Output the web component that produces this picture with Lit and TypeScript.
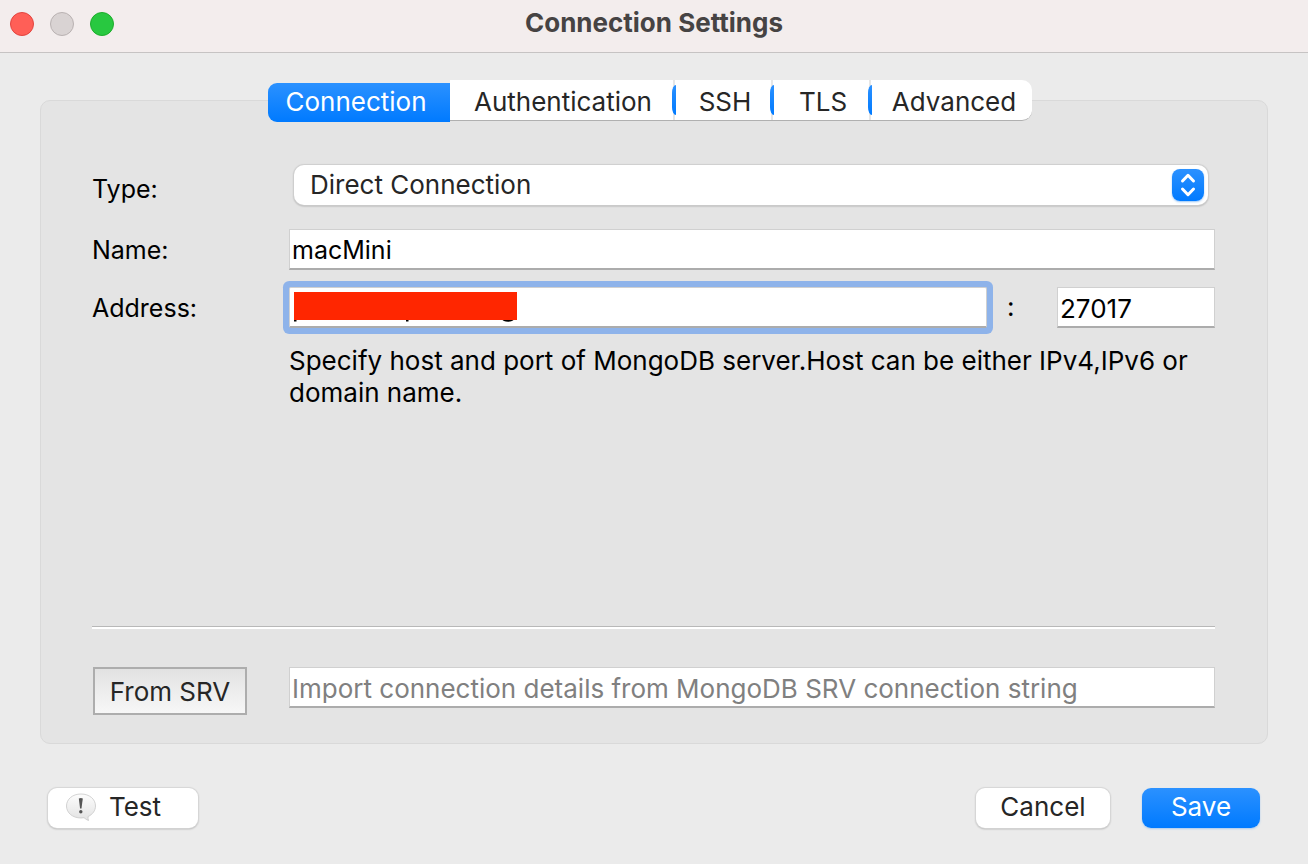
import { LitElement, html, css } from "lit";
import { customElement, state } from "lit/decorators.js";
import { classMap } from "lit/directives/class-map.js";

const TABS = ["Connection", "Authentication", "SSH", "TLS", "Advanced"];

@customElement("app-root")
export class AppRoot extends LitElement {
  @state() private active = 0;

  static styles = css`
    :host {
      display: flex;
      flex-direction: column;
      min-height: 100vh;
      box-sizing: border-box;
      background: #ebebeb;
      color: #000;
      font-family: Inter, "Liberation Sans", sans-serif;
      font-size: 26px;
      line-height: 32px;
    }
    * {
      box-sizing: border-box;
    }
    button,
    input,
    select {
      font: inherit;
      color: inherit;
      margin: 0;
      outline: none;
    }
    .titlebar {
      display: grid;
      grid-template-columns: 1fr auto 1fr;
      align-items: center;
      height: 53px;
      padding: 0 10px 5px;
      background: #f3eded;
      border-bottom: 1px solid #c6c3c3;
    }
    .lights {
      display: flex;
      gap: 16px;
    }
    .light {
      width: 24px;
      height: 24px;
      padding: 0;
      border-radius: 50%;
      border: 1px solid #e2443f;
      background: #ff5f57;
    }
    .light.minimize {
      border-color: #b9b2b2;
      background: #d9d3d3;
    }
    .light.zoom {
      border-color: #1dad2b;
      background: #28c840;
    }
    h1 {
      margin: 0;
      padding-bottom: 2px;
      font-size: 26px;
      line-height: 32px;
      font-weight: 700;
      color: #464343;
    }
    main {
      flex: 1;
      display: flex;
      flex-direction: column;
      padding: 27px 40px 0;
    }
    .tabs {
      display: flex;
      align-self: center;
      align-items: flex-start;
      position: relative;
      margin: 0 8px -22px 0;
    }
    .tab {
      position: relative;
      display: flex;
      justify-content: center;
      height: 41px;
      padding: 2px 0 0 4px;
      border: 0;
      border-bottom: 1px solid #b0b0b0;
      background: #fff;
      color: #262626;
      line-height: 40px;
    }
    .tab.wide {
      width: 222px;
    }
    .tab.selected {
      width: 182px;
      height: 39px;
      margin-top: 3px;
      padding: 0 6px 0 0;
      border: 0;
      border-radius: 9px 0 0 9px;
      background: linear-gradient(#2b91ff, #007aff);
      color: #fff;
      line-height: 38px;
    }
    .tab.divided {
      width: 98px;
      padding-left: 8px;
      background: linear-gradient(#e6e6e6, #e6e6e6) 1px 0 / 2px 40px no-repeat, #fff;
    }
    .tab.divided::before {
      content: "";
      position: absolute;
      left: 0;
      top: 5px;
      width: 4px;
      height: 30px;
      border-radius: 4px 0 0 4px / 8px 0 0 8px;
      background: linear-gradient(#2b91ff, #007aff);
    }
    .tab.last {
      width: 164px;
      border-radius: 0 10px 10px 0;
    }
    .panel {
      flex: 1;
      display: flex;
      flex-direction: column;
      padding: 64px 52px 28px 51px;
      border: 1px solid #d9d9d9;
      border-radius: 10px;
      background: #e4e4e4;
    }
    .form {
      display: grid;
      grid-template-columns: 197px minmax(0, 1fr);
      align-items: center;
      row-gap: 17px;
    }
    label,
    .name {
      font-size: 25px;
    }
    .field {
      width: 100%;
      min-width: 0;
      height: 41px;
      padding: 2px 2px 0;
      border: 1px solid #d0d0d0;
      border-bottom: 2px solid #acacac;
      border-radius: 0;
      background: #fff;
    }
    .field::placeholder {
      color: #808080;
      opacity: 1;
    }
    .select {
      display: grid;
      grid-template-columns: minmax(0, 1fr) 36px;
      align-items: center;
      height: 40px;
      margin: 0 7px 7px 5px;
      border-radius: 10px;
      background: #fff;
      box-shadow: 0 0 1px 1px #cfcfcf, 0 1px 2px #888;
    }
    .select select {
      grid-area: 1 / 1 / 2 / 3;
      height: 40px;
      padding: 0 40px 0 16px;
      appearance: none;
      border: 0;
      background: transparent;
      color: #262626;
    }
    .stepper {
      grid-area: 1 / 2;
      width: 32px;
      height: 32px;
      border-radius: 8px;
      background: linear-gradient(#2b91ff, #007aff);
      box-shadow: 0 1px 2px #9ac6f5;
      pointer-events: none;
    }
    .stepper svg {
      display: block;
    }
    .address {
      display: grid;
      grid-template-columns: minmax(0, 1fr) 70px 158px;
    }
    .colon {
      padding: 4px 0 0 20px;
    }
    .host {
      position: relative;
    }
    .host .field {
      box-shadow: 0 0 0 6px #8eb3ea;
      border-radius: 2px;
    }
    .redaction {
      position: absolute;
      left: 5px;
      top: 5px;
      display: block;
    }
    .hint {
      grid-column: 2;
      margin: 0;
    }
    .rule {
      width: 100%;
      height: 3px;
      margin: auto 0 0;
      border: 0;
      border-top: 1px solid #b8b8b8;
      background: #fff;
    }
    .import {
      display: grid;
      grid-template-columns: 154px minmax(0, 1fr);
      column-gap: 42px;
      padding: 38px 0 0 1px;
    }
    .srv {
      height: 48px;
      padding: 2px 0 0;
      border: 2px solid #adadad;
      background: linear-gradient(#e2e2e2, #f7f7f7);
      color: #262626;
    }
    footer {
      display: flex;
      gap: 32px;
      padding: 44px 48px 36px;
    }
    .push {
      display: flex;
      align-items: center;
      justify-content: center;
      width: 134px;
      height: 40px;
      padding: 0 0 2px;
      border: 0;
      border-radius: 9px;
      background: #fff;
      color: #262626;
      box-shadow: 0 0 1px 1px #d6d6d6, 0 1px 2px #999;
    }
    .push.test {
      width: 150px;
      margin-right: auto;
      padding-right: 20px;
      gap: 12px;
    }
    .push.primary {
      width: 118px;
      background: linear-gradient(#2b91ff, #007aff);
      color: #fff;
      box-shadow: 0 1px 2px #a9cbf0;
    }
  `;

  private tabClasses(i: number) {
    return classMap({
      tab: true,
      selected: i === this.active,
      wide: i === 1,
      divided: i > 1,
      last: i === TABS.length - 1,
    });
  }

  render() {
    return html`
      <header class="titlebar">
        <div class="lights">
          <button class="light" aria-label="Close"></button>
          <button class="light minimize" aria-label="Minimize" disabled></button>
          <button class="light zoom" aria-label="Zoom"></button>
        </div>
        <h1>Connection Settings</h1>
      </header>
      <main>
        <div class="tabs" role="tablist">
          ${TABS.map(
            (name, i) => html`<button
              class=${this.tabClasses(i)}
              role="tab"
              aria-selected=${i === this.active ? "true" : "false"}
              @click=${() => (this.active = i)}
            >${name}</button>`
          )}
        </div>
        <section class="panel">
          <div class="form">
            <label for="type">Type:</label>
            <div class="select">
              <select id="type">
                <option>Direct Connection</option>
              </select>
              <span class="stepper">
                <svg width="32" height="32" viewBox="0 0 32 32" fill="none" stroke="#fff" stroke-width="3" stroke-linecap="round" stroke-linejoin="round">
                  <path d="M10.500 12 16 6.300l5.500 5.700M10.500 20 16 25.700l5.500-5.700" />
                </svg>
              </span>
            </div>
            <label for="name">Name:</label>
            <input id="name" class="field name" .value=${"macMini"} />
            <label for="host">Address:</label>
            <div class="address">
              <div class="host">
                <input id="host" class="field" />
                <svg class="redaction" width="224" height="31" viewBox="0 0 224 31" aria-hidden="true">
                  <path d="M0 27h2.500v2.500H0zM112 27h2.500v2.500H112zM208 27h12q-1 2.800-6 2.800T208 27z" fill="#000" />
                  <path d="M0 0h223v28H0z" fill="#ff2600" />
                </svg>
              </div>
              <span class="colon">:</span>
              <input class="field" aria-label="Port" .value=${"27017"} />
            </div>
            <p class="hint">
              Specify host and port of MongoDB server.Host can be either IPv4,IPv6 or domain name.
            </p>
          </div>
          <hr class="rule" />
          <div class="import">
            <button class="srv">From SRV</button>
            <input class="field" aria-label="SRV connection string" placeholder="Import connection details from MongoDB SRV connection string" />
          </div>
        </section>
      </main>
      <footer>
        <button class="push test">
          <svg width="32" height="30" viewBox="0 0 32 30" aria-hidden="true">
            <defs>
              <linearGradient id="bubble" x1="0" y1="0" x2="0" y2="1">
                <stop offset="0" stop-color="#fdfdfd" />
                <stop offset="1" stop-color="#e2e2e2" />
              </linearGradient>
            </defs>
            <path d="M16 2C7.500 2 1.500 7.200 1.500 14S7.500 26 16 26c1 0 2-.1 3-.3 1.500 1.300 3 2.300 4.500 2.800-.5-1.300-.6-2.600-.4-4 4.500-2 7.400-5.900 7.400-10.500C30.500 7.200 24.500 2 16 2z" fill="url(#bubble)" stroke="#c8c8c8" stroke-width=".8" />
            <path d="M13.800 6.500q2-1.200 4 0l-1.300 10h-1.400z" fill="#555" />
            <circle cx="15.800" cy="19.700" r="1.700" fill="#555" />
          </svg>
          Test
        </button>
        <button class="push">Cancel</button>
        <button class="push primary">Save</button>
      </footer>
    `;
  }
}
